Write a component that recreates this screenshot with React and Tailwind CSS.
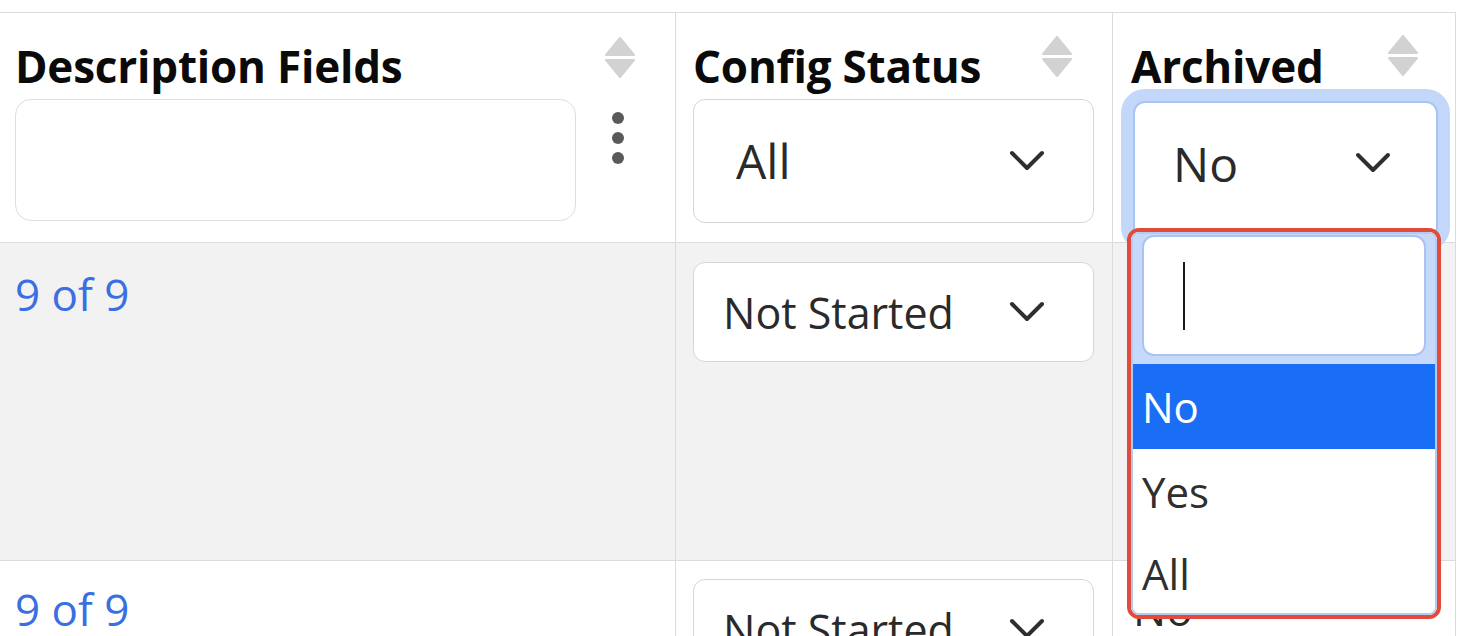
import React from "react";

function SortIcon({ className }) {
  return (
    <svg className={className} width="30" height="41" viewBox="0 0 30 41">
      <path d="M15 1 L29 18 L1 18 Z" fill="#d2d2d2" stroke="#d2d2d2" strokeWidth="2" strokeLinejoin="round" />
      <path d="M1 23 L29 23 L15 40 Z" fill="#d2d2d2" stroke="#d2d2d2" strokeWidth="2" strokeLinejoin="round" />
    </svg>
  );
}

function Chevron({ className = "" }) {
  return (
    <svg width="36" height="22" viewBox="0 0 36 22" className={"shrink-0 " + className}>
      <polyline points="3,3 18,18 33,3" fill="none" stroke="#2f2f2f" strokeWidth="4" strokeLinecap="round" strokeLinejoin="round" />
    </svg>
  );
}

function Kebab() {
  return (
    <div className="flex flex-col items-center gap-[8px] pt-[13px]">
      <div className="w-[12px] h-[12px] rounded-full bg-[#5a5a5a]" />
      <div className="w-[12px] h-[12px] rounded-full bg-[#5a5a5a]" />
      <div className="w-[12px] h-[12px] rounded-full bg-[#5a5a5a]" />
    </div>
  );
}

function RowSelect() {
  return (
    <div className="mt-[18px] w-[401px] h-[100px] bg-white border border-[#d6d6d6] rounded-[12px] flex items-center pl-[29px] pr-[48px] justify-between">
      <span className="text-[43px] leading-none text-[#2a2a2a]">Not Started</span>
      <Chevron />
    </div>
  );
}

export default function App() {
  return (
    <div className="relative w-[1470px] h-[636px] overflow-hidden bg-white pt-[12px] font-['Open_Sans',sans-serif]">
      <div className="w-[1456px] border-t border-r border-[#dcdcdc] grid grid-cols-[676px_437px_342px]">
        {/* Header row */}
        <div className="relative h-[230px] border-r border-b border-[#dcdcdc] pl-[15px] pt-[31px]">
          <div className="text-[44px] font-bold leading-none text-[#0a0a0a] tracking-[-0.2px]">Description Fields</div>
          <div className="flex items-start mt-[11px]">
            <div className="w-[561px] h-[122px] rounded-[16px] border border-[#dedede] bg-white" />
            <div className="ml-[36px]">
              <Kebab />
            </div>
          </div>
          <SortIcon className="absolute top-[24px] right-[40px]" />
        </div>
        <div className="relative h-[230px] border-r border-b border-[#dcdcdc] pl-[17px] pt-[31px]">
          <div className="text-[44px] font-bold leading-none text-[#0a0a0a] tracking-[-0.2px]">Config Status</div>
          <div className="mt-[11px] w-[401px] h-[124px] bg-white border border-[#d6d6d6] rounded-[12px] flex items-center justify-between pl-[42px] pr-[48px]">
            <span className="text-[48px] leading-none text-[#2a2a2a]">All</span>
            <Chevron />
          </div>
          <SortIcon className="absolute top-[23px] right-[40px]" />
        </div>
        <div className="relative h-[230px] border-b border-[#dcdcdc] pl-[18px] pt-[31px]">
          <div className="text-[44px] font-bold leading-none text-[#0a0a0a] tracking-[-0.2px]">Archived</div>
          <div className="mt-[13px] ml-[2px] w-[305px] h-[138px] bg-white border-2 border-[#a8c4f2] rounded-[12px] shadow-[0_0_0_12px_#c3d7fa] flex items-start justify-between pl-[38px] pr-[45px] pt-[37px]">
            <span className="text-[48px] leading-none text-[#2a2a2a]">No</span>
            <Chevron className="mt-[12px]" />
          </div>
          <SortIcon className="absolute top-[22px] right-[37px]" />
        </div>

        {/* Row 1 */}
        <div className="h-[318px] border-r border-b border-[#dcdcdc] bg-[#f2f2f2] pl-[15px] pt-[29px]">
          <span className="text-[44px] leading-none text-[#3a6fe2]">9 of 9</span>
        </div>
        <div className="h-[318px] border-r border-b border-[#dcdcdc] bg-[#f2f2f2] pl-[17px] pt-px">
          <RowSelect />
        </div>
        <div className="h-[318px] border-b border-[#dcdcdc] bg-[#f2f2f2] pl-[20px] pt-[29px]">
          <span className="text-[44px] leading-none text-[#2a2a2a]">No</span>
        </div>

        {/* Row 2 */}
        <div className="h-[200px] border-r border-[#dcdcdc] bg-white pl-[15px] pt-[26px]">
          <span className="text-[44px] leading-none text-[#3a6fe2]">9 of 9</span>
        </div>
        <div className="h-[200px] border-r border-[#dcdcdc] bg-white pl-[17px]">
          <RowSelect />
        </div>
        <div className="h-[200px] bg-white pl-[20px] pt-[26px]">
          <span className="text-[44px] leading-none text-[#2a2a2a]">No</span>
        </div>
      </div>

      {/* Dropdown overlay */}
      <div className="absolute left-[1127px] top-[228px] w-[314px] h-[391px] border-4 border-[#e24b39] rounded-[12px] overflow-hidden bg-white">
        <div className="h-full flex flex-col border-2 border-[#b3cbf3] rounded-[8px] overflow-hidden">
          <div className="bg-[#c6d9fa] pl-[9px] pr-[9px] pt-[1px] pb-[8px]">
            <div className="h-[121px] bg-white border-2 border-[#a9c4f2] rounded-[12px] pl-[39px] pt-[25px]">
              <div className="w-[2px] h-[68px] bg-[#1a1a1a]" />
            </div>
          </div>
          <div className="h-[85px] shrink-0 bg-[#1a6ef5] flex items-center pl-[9px]">
            <span className="text-[42px] leading-none text-white">No</span>
          </div>
          <div className="h-[85px] shrink-0 bg-white flex items-center pl-[9px]">
            <span className="text-[42px] leading-none text-[#2f2f2f]">Yes</span>
          </div>
          <div className="h-[80px] shrink-0 bg-white flex items-center pl-[9px]">
            <span className="text-[42px] leading-none text-[#2f2f2f]">All</span>
          </div>
        </div>
      </div>
    </div>
  );
}
